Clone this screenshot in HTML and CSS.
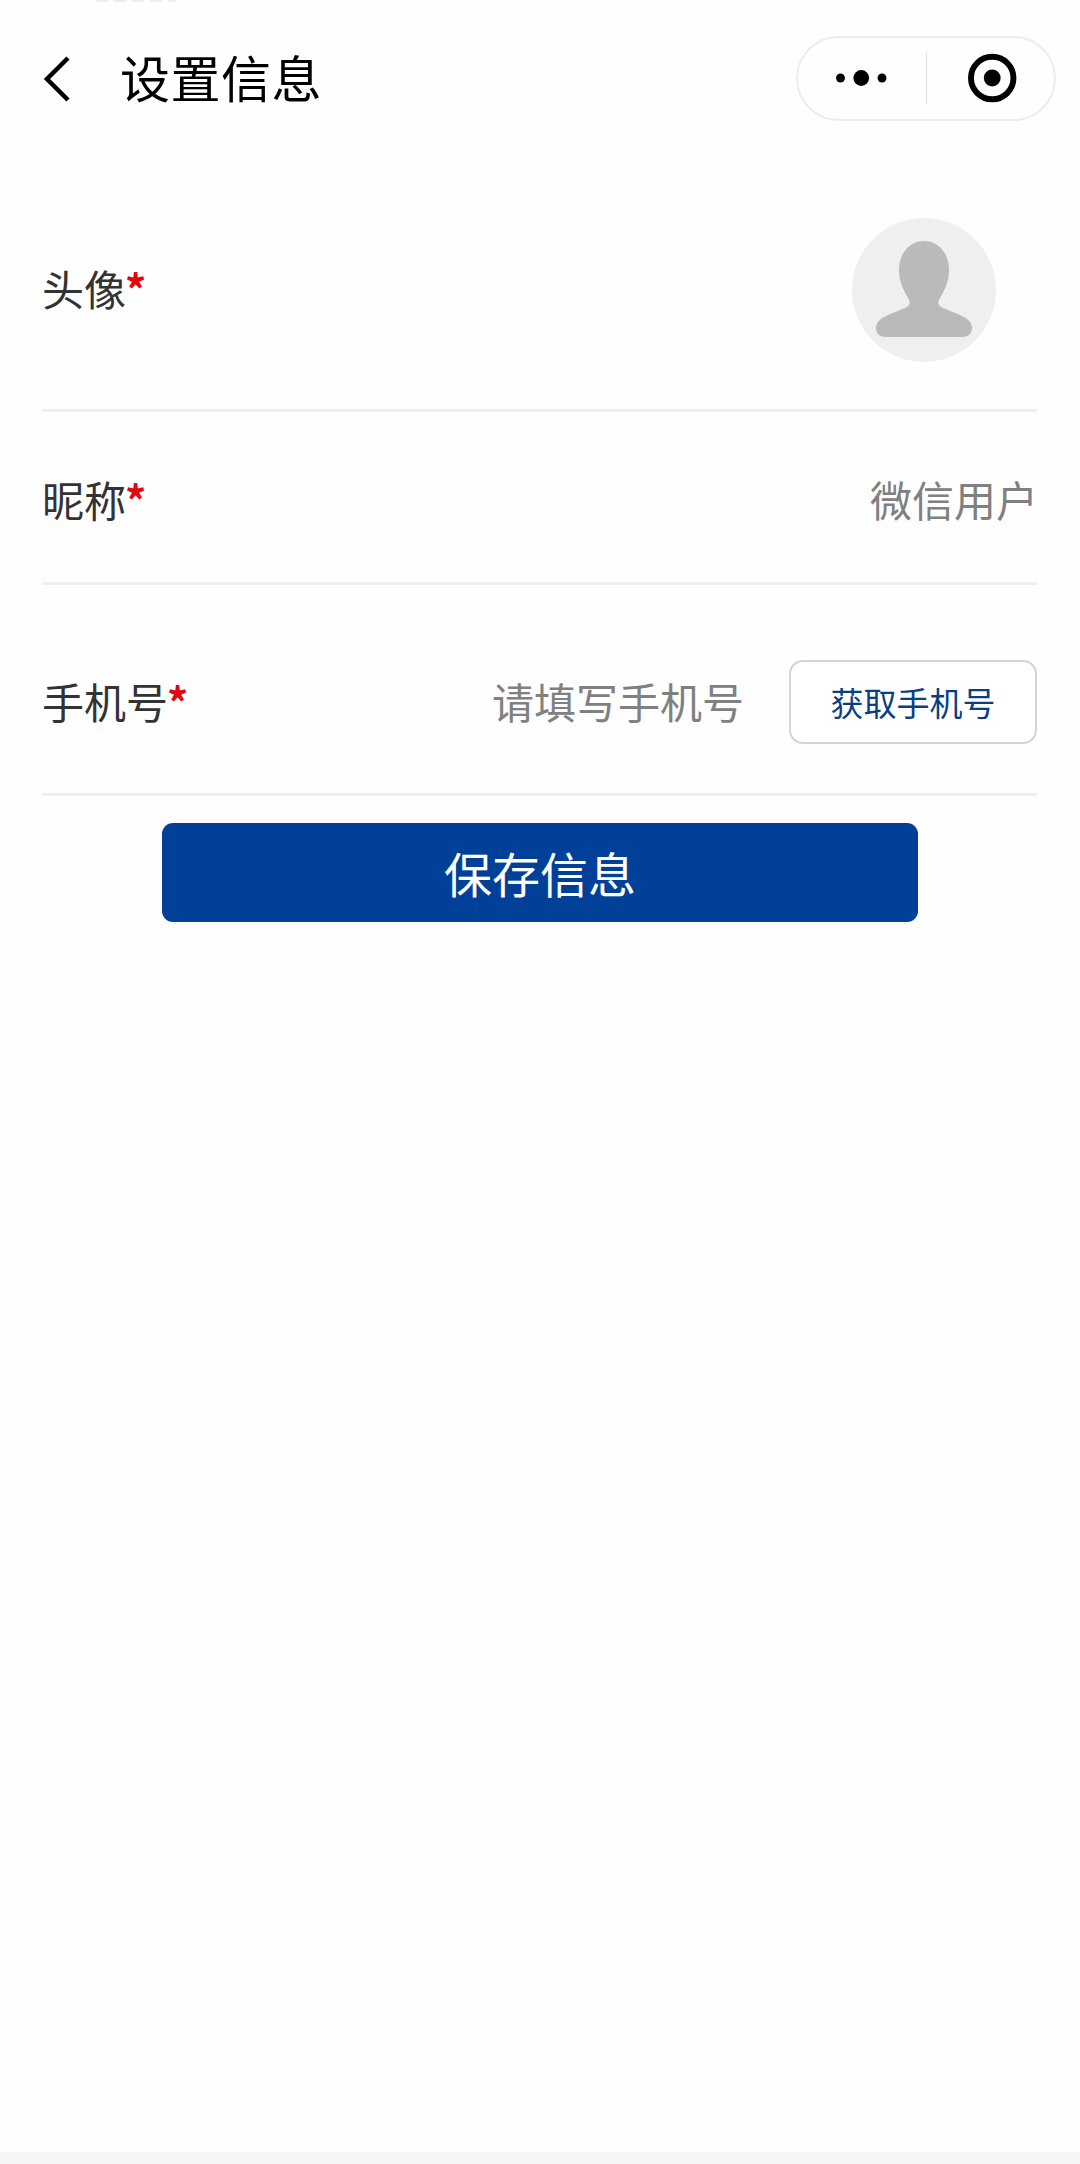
FILE: index.html
```html
<!DOCTYPE html>
<html lang="zh-CN">
<head>
  <meta charset="UTF-8">
  <title>设置信息</title>
  <link rel="stylesheet" href="styles.css">
</head>
<body>

  <div class="page">
    <div class="status-edge"></div>
    <div class="nav">
      <svg class="back" width="34" height="50" viewBox="0 0 34 50">
        <path d="M27 4 L6 25 L27 46" fill="none" stroke="#000" stroke-width="4.5"/>
      </svg>
      <h1 class="nav-title">设置信息</h1>
      <div class="capsule">
        <svg class="capsule-more" width="129" height="83" viewBox="0 0 129 83">
          <circle cx="43" cy="41" r="4.5" fill="#000"/>
          <circle cx="64" cy="41" r="8" fill="#000"/>
          <circle cx="85" cy="41" r="4.5" fill="#000"/>
        </svg>
        <span class="capsule-line"></span>
        <svg class="capsule-close" width="129" height="83" viewBox="0 0 129 83">
          <circle cx="67" cy="41" r="21.5" fill="none" stroke="#000" stroke-width="6"/>
          <circle cx="67" cy="41" r="8.5" fill="#000"/>
        </svg>
      </div>
    </div>

    <div class="form">
      <div class="row row-avatar">
        <span class="label">头像<i>*</i></span>
        <div class="avatar">
          <svg width="144" height="144" viewBox="0 0 144 144">
            <path d="M72 23 C87 23 97 36 97 52 C97 66 91 74 87 82 C85 86 87 88 91 90 L108 97 C115 100 120 104 120 110 C120 116 116 119 110 119 L34 119 C28 119 24 116 24 110 C24 104 29 100 36 97 L53 90 C57 88 59 86 57 82 C53 74 47 66 47 52 C47 36 57 23 72 23 Z" fill="#bababa"/>
          </svg>
        </div>
      </div>
      <div class="row row-name">
        <span class="label">昵称<i>*</i></span>
        <span class="value">微信用户</span>
      </div>
      <div class="row row-phone">
        <span class="label">手机号<i>*</i></span>
        <span class="value phone-value">请填写手机号</span>
        <div class="phone-btn">获取手机号</div>
      </div>
    </div>

    <div class="save-btn">保存信息</div>

    <div class="spacer"></div>
    <div class="bottom-strip"></div>
  </div>

</body>
</html>
```

FILE: styles.css
```css
* { box-sizing: border-box; margin: 0; padding: 0; }
body {
  font-family: "Noto Sans CJK SC", "Noto Sans", sans-serif;
  background: #fefefe;
  color: #333;
}
.page {
  display: flex;
  flex-direction: column;
  height: 2164px;
}

/* last bit of the status bar, cut off by the screenshot */
.status-edge {
  width: 80px;
  height: 2px;
  margin-left: 96px;
  background: repeating-linear-gradient(90deg, #eeeeee 0 12px, #fefefe 12px 18px);
}

/* top bar */
.nav {
  display: flex;
  align-items: flex-start;
  height: 168px;
  padding: 34px 24px 0 41px;
}
.back {
  margin-top: 18px;
}
.nav-title {
  font-size: 50px;
  font-weight: 400;
  line-height: 70px;
  color: #000;
  margin-left: 45px;
  margin-top: 5px;
  letter-spacing: 0.5px;
}
.capsule {
  display: flex;
  align-items: center;
  width: 260px;
  height: 85px;
  margin-left: auto;
  border: 2px solid #ececec;
  border-radius: 43px;
}
.capsule-line {
  width: 1px;
  height: 51px;
  background: #dcdcdc;
}

/* form rows */
.form {
  padding: 0 43px 0 42px;
}
.row {
  display: flex;
  align-items: center;
  border-bottom: 3px solid #f0f0f0;
}
.label {
  font-size: 42px;
  line-height: 60px;
  color: #333;
}
.label i {
  margin-left: -1px;
  font-style: normal;
  font-weight: 700;
  color: #e2060f;
}
.value {
  margin-left: auto;
  font-size: 42px;
  line-height: 60px;
  color: #808080;
}
.row-avatar {
  justify-content: space-between;
  height: 242px;
  padding-right: 41px;
}
.row-avatar .label {
  margin-bottom: 3px;
}
.avatar {
  width: 144px;
  height: 144px;
  border-radius: 50%;
  background: #efefef;
}
.avatar svg {
  display: block;
}
.row-name {
  height: 173px;
  padding-top: 4px;
}
.row-name .value {
  margin-right: -1px;
}
.row-phone {
  height: 211px;
  padding-top: 24px;
}
.phone-value {
  margin-right: 45px;
}
.phone-btn {
  width: 248px;
  height: 84px;
  margin-top: 2px;
  border: 2px solid #d4d4d4;
  border-radius: 14px;
  background: #fff;
  color: #0b3f84;
  font-size: 33px;
  line-height: 80px;
  text-align: center;
}

/* save */
.save-btn {
  align-self: center;
  width: 756px;
  height: 99px;
  margin-top: 27px;
  border-radius: 11px;
  background: #004098;
  color: #fff;
  font-size: 48px;
  line-height: 99px;
  text-align: center;
}

.spacer {
  flex: 1;
}
.bottom-strip {
  height: 12px;
  background: #f5f5f5;
}
```
